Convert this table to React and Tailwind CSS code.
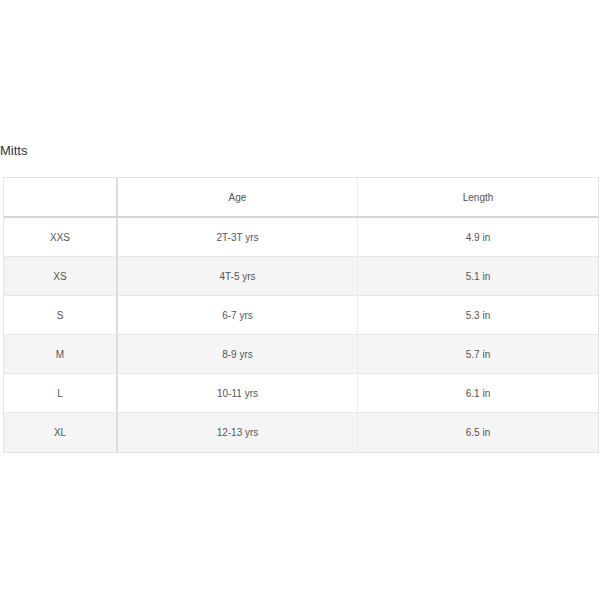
import React from "react";

const rows = [
  { size: "XXS", age: "2T-3T yrs", length: "4.9 in" },
  { size: "XS", age: "4T-5 yrs", length: "5.1 in" },
  { size: "S", age: "6-7 yrs", length: "5.3 in" },
  { size: "M", age: "8-9 yrs", length: "5.7 in" },
  { size: "L", age: "10-11 yrs", length: "6.1 in" },
  { size: "XL", age: "12-13 yrs", length: "6.5 in" },
];

export default function App() {
  return (
    <div className="w-[600px] h-[600px] bg-white pt-[143px] font-['Liberation_Sans',Arial,sans-serif]">
      <h2 className="text-[13px] leading-4 text-[#333] pl-0">Mitts</h2>
      <div className="mt-[18px] ml-[3px] w-[596px] border border-[#e3e3e3] text-[10px] text-[#555]">
        {/* header */}
        <div className="grid grid-cols-[114px_240px_1fr] h-[40px] border-b-2 border-[#d6d6d6]">
          <div className="border-r-2 border-[#dcdcdc]" />
          <div className="flex items-center justify-center border-r border-[#ececec]">Age</div>
          <div className="flex items-center justify-center">Length</div>
        </div>
        {rows.map((row, i) => (
          <div
            key={row.size}
            className={`grid grid-cols-[114px_240px_1fr] h-[39px] ${i % 2 ? "bg-[#f5f5f5]" : "bg-white"} ${i < rows.length - 1 ? "border-b border-[#e8e8e8]" : ""}`}
          >
            <div className="flex items-center justify-center border-r-2 border-[#dcdcdc]">{row.size}</div>
            <div className="flex items-center justify-center border-r border-[#ececec]">{row.age}</div>
            <div className="flex items-center justify-center">{row.length}</div>
          </div>
        ))}
      </div>
    </div>
  );
}
